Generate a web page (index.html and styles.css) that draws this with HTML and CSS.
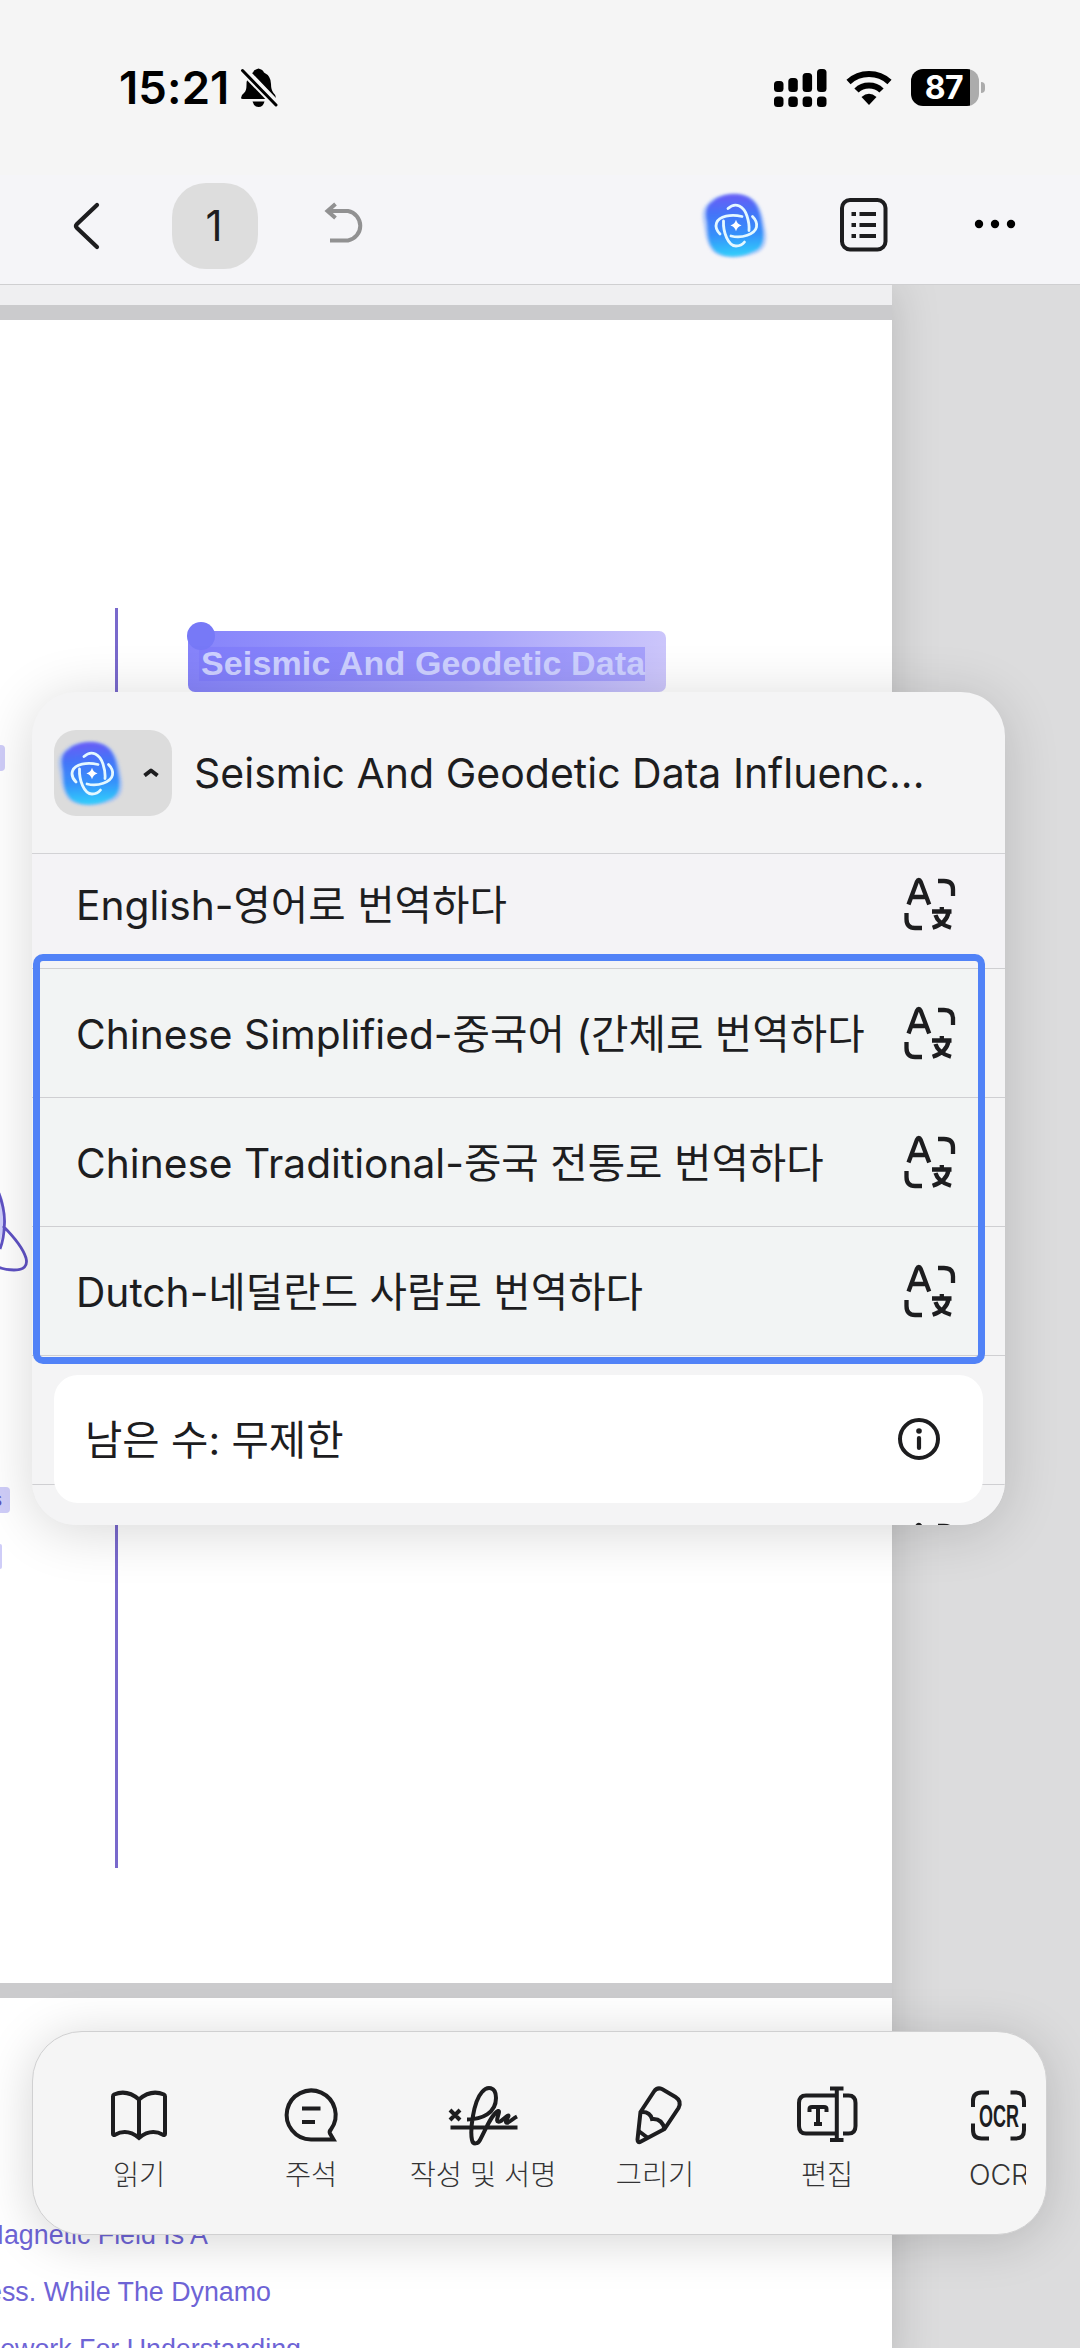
FILE: index.html
```html
<!DOCTYPE html>
<html lang="ko">
<head>
    <meta charset="UTF-8">
    <meta name="viewport" content="width=device-width, initial-scale=1.0">
    <title>PDF 번역</title>
    <link rel="stylesheet" href="styles.css">
</head>
<body>
    <!-- 공용 아이콘 -->
    <svg class="sprite" aria-hidden="true">
        <defs>
            <linearGradient id="blobFill" x1="0.45" y1="0" x2="0.5" y2="1">
                <stop offset="0" stop-color="#6a5cf6"/>
                <stop offset="0.3" stop-color="#4474f8"/>
                <stop offset="0.65" stop-color="#3590fa"/>
                <stop offset="1" stop-color="#2fd0fb"/>
            </linearGradient>
            <filter id="soft" x="-10%" y="-10%" width="120%" height="120%">
                <feGaussianBlur stdDeviation="1.8"/>
            </filter>
            <symbol id="ai" viewBox="0 0 80 80">
                <path d="M14 17C23 7 49 6 59 15C67 22 69 34 71 46C73 59 69 66 59 69C45 74 25 74 17 66C10 57 10 47 8 37C6 27 8 22 14 17Z" fill="#8fb4fb" opacity=".6" filter="url(#soft)"/>
                <path d="M17 17C27 7 49 7 57 15C65 22 66 34 68 46C69 58 66 64 57 67C45 73 28 73 20 66C12 58 13 47 12 37C10 27 11 21 17 17Z" fill="url(#blobFill)" filter="url(#soft)"/>
                <g fill="none" stroke="#e4f8ff" stroke-width="2.8" stroke-linecap="round">
                    <path d="M33 23.5C41 16 49 22 52 31C53.6 36 54.4 41 54 45.5"/>
                    <path d="M47 31.5C36 29 24 31 21.5 38C20.2 42 22 46 25 49"/>
                    <path d="M28.5 36C28 47 33 61 41 61C45 61 48 59 49.5 57"/>
                    <path d="M36 51C47 54 60 49 61.5 42C62.4 38 60 34 57.5 31.5"/>
                </g>
                <path d="M41 34.8Q42.2 39.2 46.6 40.5Q42.2 41.8 41 46.2Q39.8 41.8 35.4 40.5Q39.8 39.2 41 34.8Z" fill="#fff"/>
            </symbol>
            <symbol id="translate" viewBox="0 0 52 54">
                <g fill="none" stroke="#1d1d1f" stroke-width="4.3">
                    <path d="M4.500 27.500L12.800 5Q14.800 1 16.800 5L25.200 27.500M8 20H22"/>
                    <path d="M34 4H40Q49 4 49 12.500V19"/>
                    <path d="M2.500 36V42Q2.500 51 11 51H18"/>
                    <path d="M28 34.500H47.500M37.800 30V34.500M31.500 38Q34 47 47 50.800M44.500 35Q43 46 28.600 50.800"/>
                </g>
            </symbol>
        </defs>
    </svg>

    <div class="screen">
        <div class="status-bar">
            <div class="status-left">
                <span class="clock">15:21</span>
                <svg class="bell" width="38" height="42" viewBox="0 0 38 42">
                    <path d="M1 31Q1 28 4 26Q6.500 24 6.500 18Q6.500 14 7.500 12L26.500 32H3Q1 32 1 31Z M13 5.500Q14 2.500 18.500 1.500Q23 2.500 24 5.500Q31 9 31 17Q31 23 33.500 26Q36 28 36 31L12 6Z"/>
                    <path d="M12.500 34.500H24.500Q23 40 18.500 40Q14 40 12.500 34.500Z"/>
                    <path d="M2.500 3.500L36 38" stroke="#f5f5f5" stroke-width="7"/>
                    <path d="M2.500 3.500L36 38" stroke="#000" stroke-width="3" stroke-linecap="round"/>
                </svg>
            </div>
            <div class="status-right">
                <svg width="53" height="38" viewBox="0 0 53 38">
                    <rect x="0" y="12" width="9.500" height="11" rx="3.500"/>
                    <rect x="14.300" y="9" width="9.500" height="14" rx="3.500"/>
                    <rect x="28.600" y="4" width="9.500" height="19" rx="3.500"/>
                    <rect x="43" y="0" width="9.500" height="23" rx="3.500"/>
                    <rect x="0" y="27.500" width="9.500" height="10.500" rx="3.500"/>
                    <rect x="14.300" y="27.500" width="9.500" height="10.500" rx="3.500"/>
                    <rect x="28.600" y="27.500" width="9.500" height="10.500" rx="3.500"/>
                    <rect x="43" y="27.500" width="9.500" height="10.500" rx="3.500"/>
                </svg>
                <svg class="wifi" width="46" height="36" viewBox="0 0 46 36">
                    <g fill="none" stroke="#000" stroke-width="6">
                        <path d="M2.500 12Q11 4 23 4Q35 4 43.500 12"/>
                        <path d="M10.500 20.500Q15.500 15.500 23 15.500Q30.500 15.500 35.500 20.500"/>
                    </g>
                    <path d="M15.500 27Q23 20.500 30.500 27L23 35Z"/>
                </svg>
                <div class="battery"><span>87</span></div>
                <div class="battery-nub"></div>
            </div>
        </div>

        <div class="toolbar">
            <svg class="back" width="28" height="48" viewBox="0 0 28 48">
                <path d="M25 3L5 22Q3 24 5 26L25 45" fill="none" stroke="#1d1d1f" stroke-width="4.200" stroke-linecap="round"/>
            </svg>
            <div class="page-num">1</div>
            <svg class="undo" width="44" height="42" viewBox="0 0 44 42">
                <path d="M3 9H24A15 15 0 0 1 24 38.500H6M11.500 2L3.500 9L11.500 16" fill="none" stroke="#919192" stroke-width="4"/>
            </svg>
            <svg class="ai-btn" width="80" height="80"><use href="#ai"/></svg>
            <svg class="outline-btn" width="48" height="54" viewBox="0 0 48 54">
                <rect x="2" y="2" width="43.500" height="49.500" rx="8" fill="none" stroke="#1d1d1f" stroke-width="4"/>
                <path d="M11.500 16H16M19.500 16H36M11.500 27H16M19.500 27H36M11.500 38H16M19.500 38H36" stroke="#1d1d1f" stroke-width="4"/>
            </svg>
            <svg class="more" width="42" height="10" viewBox="0 0 42 10">
                <circle cx="5" cy="5" r="4.200"/><circle cx="21" cy="5" r="4.200"/><circle cx="37" cy="5" r="4.200"/>
            </svg>
        </div>

        <div class="doc">
            <div class="pages">
                <div class="page page-prev"></div>
                <div class="page page-main">
                    <div class="axis"></div>
                    <div class="heading"><span class="heading-text">Seismic And Geodetic Data</span><i class="handle"></i></div>
                    <div class="scrap scrap-a"></div>
                    <svg class="swirl" width="30" height="100" viewBox="0 0 30 100">
                        <path d="M-20 10Q5 15 4.500 45Q4 65 -4 85Z" fill="#cfcffb"/>
                        <path d="M-2 22Q5 40 4.500 54Q4 70 0 80M3 57Q22 76 26 89Q29 101 14 101Q4 101 -2 98" fill="none" stroke="#5f52c4" stroke-width="2.800"/>
                    </svg>
                    <div class="scrap scrap-b">s</div>
                    <div class="scrap scrap-c"></div>
                </div>
                <div class="page page-next">
                    <p>Magnetic Field Is A</p>
                    <p>Process. While The Dynamo</p>
                    <p>Framework For Understanding</p>
                </div>
            </div>
        </div>

        <div class="popup">
            <div class="popup-head">
                <div class="chip">
                    <svg class="chip-icon" width="80" height="80"><use href="#ai"/></svg>
                    <svg class="caret" width="16" height="9" viewBox="0 0 16 9"><path d="M1.500 7.500L8 2.500L14.500 7.500" fill="none" stroke="#1d1d1f" stroke-width="4" stroke-linejoin="round"/></svg>
                </div>
                <div class="popup-title">Seismic And Geodetic Data Influenc...</div>
            </div>
            <div class="lang-list">
                <div class="lang"><span>English-영어로 번역하다</span><svg width="52" height="54"><use href="#translate"/></svg></div>
                <div class="lang picked"><span>Chinese Simplified-중국어 (간체로 번역하다</span><svg width="52" height="54"><use href="#translate"/></svg></div>
                <div class="lang picked"><span>Chinese Traditional-중국 전통로 번역하다</span><svg width="52" height="54"><use href="#translate"/></svg></div>
                <div class="lang picked"><span>Dutch-네덜란드 사람로 번역하다</span><svg width="52" height="54"><use href="#translate"/></svg></div>
                <div class="lang"></div>
                <div class="lang"><span></span><svg width="52" height="54"><use href="#translate"/></svg></div>
            </div>
            <div class="quota">
                <span>남은 수: 무제한</span>
                <svg width="44" height="44" viewBox="0 0 44 44">
                    <circle cx="22" cy="22" r="19" fill="none" stroke="#1d1d1f" stroke-width="4"/>
                    <circle cx="22" cy="14" r="2.800" fill="#1d1d1f"/>
                    <path d="M22 21L22 31" stroke="#1d1d1f" stroke-width="4.200" stroke-linecap="round"/>
                </svg>
            </div>
        </div>
        <div class="focus-box"></div>

        <div class="dock">
            <div class="dock-items">
                <div class="tool">
                    <svg width="64" height="64" viewBox="0 0 64 64">
                        <path d="M32 16.500Q20 6 7 11.500Q6 12 6 13.500V51Q6 52.500 8 51.800Q20 45 32 55Q44 45 56 51.800Q58 52.500 58 51V13.500Q58 12 57 11.500Q44 6 32 16.500ZV55"/>
                    </svg>
                    <span>읽기</span>
                </div>
                <div class="tool">
                    <svg width="64" height="64" viewBox="0 0 64 64">
                        <path d="M32 56.500A24.500 24.500 0 1 1 51.900 46.500Q50 48.500 51 50.500L54.500 56.500ZM23 25.500H41.500M23 39H36"/>
                    </svg>
                    <span>주석</span>
                </div>
                <div class="tool">
                    <svg width="76" height="64" viewBox="0 0 76 64">
                        <path d="M5 27L15 37M15 27L5 37M5.500 44.500H72.500M22 36.500C37 36.500 51 30 51 15C51 3 42 3 37 9C28 19 25 48 27 57C28 62 33 61 35 57C41 46 46 32 53 28C57 27 47 42 56 38C63 32 66 30 61 37C60 44 67 36 72 33.500"/>
                    </svg>
                    <span>작성 및 서명</span>
                </div>
                <div class="tool">
                    <svg width="64" height="64" viewBox="0 0 64 64">
                        <path d="M17.500 29L31 8.500Q34 4 39 6L52.500 14Q59 18 55.500 25L41.500 46L18 58.500Q14.500 60.500 14.500 56.500Z"/>
                        <path d="M17.500 29Q27 28 29 36Q39 35 41.500 46M15 47.500L25 55"/>
                    </svg>
                    <span>그리기</span>
                </div>
                <div class="tool">
                    <svg width="64" height="64" viewBox="0 0 64 64">
                        <path d="M41 12.500H11Q4 12.500 4 20V43Q4 50.500 11 50.500H41M48 12.500H53.500Q60.500 12.500 60.500 20V43Q60.500 50.500 53.500 50.500H48M35 5.500H48.500M35 57H48.500M41.800 5.500V57"/>
                        <path d="M14.500 29V26Q14.500 24 17 24H29Q31.500 24 31.500 26V29M23 24V41M19 41H27"/>
                    </svg>
                    <span>편집</span>
                </div>
                <div class="tool tool-ocr">
                    <svg width="64" height="64" viewBox="0 0 64 64">
                        <path d="M6 24V18Q6 9.500 14.500 9.500H22M43.500 9.500H49Q57 9.500 57 18V24M57 40.500V47Q57 55.500 49 55.500H43.500M22 55.500H14.500Q6 55.500 6 47V40.500"/>
                        <text x="12" y="44" textLength="40" lengthAdjust="spacingAndGlyphs">OCR</text>
                    </svg>
                    <span>OCR</span>
                </div>
            </div>
        </div>
    </div>
</body>
</html>
```
FILE: styles.css
```css
* {
    margin: 0;
    padding: 0;
    box-sizing: border-box;
}

body {
    width: 1080px;
    height: 2348px;
    overflow: hidden;
    font-family: Inter, 'Noto Sans CJK KR', sans-serif;
    color: #1d1d1f;
    background: #dcdcdd;
}

svg {
    display: block;
    flex-shrink: 0;
}

.sprite {
    position: absolute;
    width: 0;
    height: 0;
}

.screen {
    position: relative;
    width: 1080px;
    height: 2348px;
    overflow: hidden;
    display: flex;
    flex-direction: column;
}

/* 상태 표시줄 */
.status-bar {
    height: 175px;
    flex-shrink: 0;
    padding: 0 95px 0 119px;
    display: flex;
    justify-content: space-between;
    align-items: center;
    background: #f5f5f5;
}

.status-left,
.status-right {
    display: flex;
    align-items: center;
}

.clock {
    font-size: 45.5px;
    font-weight: 600;
    color: #000;
    letter-spacing: 0.1px;
}

.bell {
    margin-left: 11px;
}

.wifi {
    margin-left: 19px;
}

.battery {
    width: 68px;
    height: 37px;
    margin-left: 19px;
    padding-right: 2px;
    border-radius: 12px;
    background: linear-gradient(90deg, #000 59px, #acacac 59px);
    color: #fff;
    font-size: 32px;
    font-weight: 700;
    line-height: 37px;
    text-align: center;
    letter-spacing: -0.5px;
}

.battery-nub {
    width: 4px;
    height: 11px;
    margin-left: 2px;
    border-radius: 0 5px 5px 0;
    background: #acacac;
}

/* 상단 도구 모음 */
.toolbar {
    height: 110px;
    flex-shrink: 0;
    padding: 0 64px 8px 72px;
    display: flex;
    align-items: center;
    background: #f5f5f8;
    border-bottom: 1px solid #cfcfd1;
}

.page-num {
    width: 86px;
    height: 86px;
    margin-left: 72px;
    padding-right: 2px;
    border-radius: 34px;
    background: #dddddd;
    font-size: 42px;
    line-height: 86px;
    text-align: center;
}

.undo {
    margin-left: 66px;
    margin-top: -6px;
}

.ai-btn {
    margin-left: auto;
    margin-top: -2px;
}

.outline-btn {
    margin-left: 65px;
    margin-top: -1px;
}

.more {
    margin-left: 86px;
    margin-top: -4px;
}

/* 문서 */
.doc {
    flex: 1;
    overflow: hidden;
    background: #dcdcdd;
}

.pages {
    width: 892px;
    background: #cbcbcd;
    box-shadow: 0 0 45px rgba(0, 0, 0, 0.17);
    display: flex;
    flex-direction: column;
    gap: 15px;
}

.page {
    position: relative;
    background: #fff;
}

.page-prev {
    height: 20px;
    background: #efeff1;
}

.page-main {
    height: 1663px;
}

.page-next {
    height: 380px;
    padding-top: 209px;
    overflow: hidden;
    display: flex;
    flex-direction: column;
}

.page-next p {
    height: 57px;
    flex-shrink: 0;
    line-height: 57px;
    font-family: 'Liberation Sans', Arial, sans-serif;
    font-size: 26.8px;
    color: #6e64d6;
    white-space: nowrap;
    display: flex;
    justify-content: flex-end;
}

.page-next p:nth-child(1) { width: 208px; }
.page-next p:nth-child(2) { width: 271px; }
.page-next p:nth-child(3) { width: 301px; }

.axis {
    position: absolute;
    left: 115px;
    top: 288px;
    width: 3px;
    height: 1260px;
    background: #7969cc;
}

.heading {
    position: absolute;
    left: 188px;
    top: 311px;
    width: 478px;
    height: 61px;
    padding: 16px 0 0 11px;
    border-radius: 7px;
    background: linear-gradient(100deg, #8583fb, #a9a5fa 60%, #cdc7fb);
}

.heading-text {
    display: block;
    width: 446px;
    padding-left: 2px;
    background: rgba(120, 115, 250, 0.42);
    color: #cdd0ff;
    font: bold 34px/32px 'Liberation Sans', Arial, sans-serif;
    letter-spacing: 0.14px;
    padding-bottom: 2px;
    white-space: nowrap;
}

.handle {
    position: absolute;
    left: -1px;
    top: -9px;
    width: 28px;
    height: 28px;
    border-radius: 50%;
    background: #7779f7;
}

.scrap {
    position: absolute;
    left: 0;
    border-radius: 0 4px 4px 0;
    background: #cfcdf8;
}

.scrap-a {
    top: 425px;
    width: 5px;
    height: 26px;
}

.scrap-b {
    top: 1167px;
    width: 10px;
    height: 26px;
    color: #5c52b8;
    font: 20px/25px 'Liberation Sans', Arial, sans-serif;
    text-indent: -8px;
}

.scrap-c {
    top: 1224px;
    width: 2px;
    height: 25px;
}

.swirl {
    position: absolute;
    left: 0;
    top: 849px;
    overflow: visible;
}

/* 번역 팝업 */
.popup {
    position: absolute;
    left: 32px;
    top: 692px;
    width: 973px;
    height: 833px;
    border-radius: 44px;
    background: #f4f4f5;
    box-shadow: 0 6px 55px rgba(0, 0, 0, 0.16);
    overflow: hidden;
    display: flex;
    flex-direction: column;
}

.popup-head {
    height: 162px;
    flex-shrink: 0;
    padding: 0 22px;
    display: flex;
    align-items: center;
    border-bottom: 1px solid #d2d2d5;
}

.chip {
    width: 118px;
    height: 86px;
    border-radius: 22px;
    background: #dcdcdc;
    display: flex;
    align-items: center;
}

.chip-icon {
    margin-left: -3px;
}

.caret {
    margin-left: 12px;
}

.popup-title {
    margin-left: 22px;
    font-size: 41px;
    white-space: nowrap;
}

.lang-list {
    flex: 1;
    overflow: hidden;
    background: #f4f4f5;
}

.lang {
    height: 129px;
    padding: 0 49px 0 44px;
    display: flex;
    justify-content: space-between;
    align-items: center;
    border-bottom: 1px solid #cfcfd2;
    font-size: 40.7px;
    white-space: nowrap;
}

.lang span,
.quota span {
    margin-top: -4px;
}

.lang:first-child {
    margin-top: -14px;
    background: #f4f3f6;
}

.picked {
    background: linear-gradient(90deg, #f2f4f4 950px, #f4f4f5 950px);
}

.quota {
    position: absolute;
    left: 22px;
    bottom: 22px;
    width: 929px;
    height: 128px;
    padding: 0 42px 0 31px;
    border-radius: 24px;
    background: #fff;
    display: flex;
    justify-content: space-between;
    align-items: center;
    font-size: 40.6px;
}

.focus-box {
    position: absolute;
    left: 33px;
    top: 954px;
    width: 952px;
    height: 410px;
    border: 7px solid #5182f7;
    border-radius: 10px;
}

/* 하단 메뉴 */
.dock {
    position: absolute;
    left: 32px;
    top: 2031px;
    width: 1015px;
    height: 204px;
    padding: 0 20px;
    border: 1px solid #d0d0d1;
    border-radius: 50px;
    background: #f5f5f5;
    box-shadow: 0 6px 50px rgba(0, 0, 0, 0.17);
}

.dock-items {
    height: 100%;
    overflow: hidden;
    display: flex;
}

.tool {
    width: 172px;
    flex-shrink: 0;
    padding-top: 51px;
    display: flex;
    flex-direction: column;
    align-items: center;
    font-size: 28.4px;
    font-weight: 300;
    color: #333334;
}

.tool span {
    margin-top: 8px;
    line-height: 40px;
    white-space: nowrap;
}

.tool path {
    fill: none;
    stroke: #1d1d1f;
    stroke-width: 4;
}

.tool text {
    font: bold 32px 'Liberation Sans', Arial, sans-serif;
    fill: #1d1d1f;
}
```
